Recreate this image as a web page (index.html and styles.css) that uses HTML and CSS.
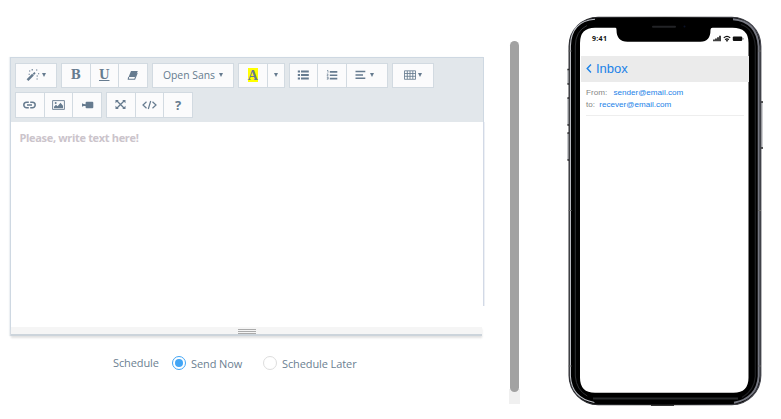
FILE: index.html
```html
<!DOCTYPE html>
<html lang="en">
<head>
<meta charset="utf-8">
<title>Compose email</title>
<link rel="stylesheet" href="styles.css">
</head>
<body>
<main class="page">
  <section class="compose">
    <div class="editor">
      <div class="toolbar">
        <div class="group">
          <button class="btn menu"><svg width="14" height="14" viewBox="0 0 14 14"><path d="M1.5 12.2 7 6.7" stroke="currentColor" stroke-width="2.4"/><path d="M7.4 6.3 9 4.7" stroke="currentColor" stroke-width="1.8"/><path d="M3 3h1.3M6.2 1v1.4M10 2h1.3M2.6 6.2h1.2M12 5.8h1.2M10.6 8h1.3M10.5 11h1.2" stroke="currentColor" stroke-width="1.1"/></svg><i class="caret"></i></button>
        </div>
        <div class="group">
          <button class="btn serif">B</button>
          <button class="btn serif underline">U</button>
          <button class="btn"><svg width="12" height="12" viewBox="0 0 12 12"><path d="M4 2h6.8L8.4 8H1.6z" fill="currentColor"/><path d="M1.6 8.2 1.3 10.2h6.4L10.2 4" fill="none" stroke="currentColor" stroke-width="1.1"/></svg></button>
        </div>
        <div class="group">
          <button class="btn font">Open Sans<i class="caret"></i></button>
        </div>
        <div class="group">
          <button class="btn"><span class="mark">A</span></button>
          <button class="btn narrow"><i class="caret"></i></button>
        </div>
        <div class="group">
          <button class="btn"><svg width="12" height="10" viewBox="0 0 12 10"><path d="M.8 1.5H3M.8 5H3M.8 8.5H3M4 1.5h7.8M4 5h7.8M4 8.5h7.8" stroke="currentColor" stroke-width="1.8"/></svg></button>
          <button class="btn"><svg width="12" height="10" viewBox="0 0 12 10"><path d="M1 .5h1v2.2M.8 4h1.4L1 5.8h1.4M.8 7.2h1.4v2H.8M1.2 8.2h1" fill="none" stroke="currentColor" stroke-width=".7"/><path d="M3.8 1.9h7.5M3.8 5.2h7.5M3.8 8.6h7.5" stroke="currentColor" stroke-width="1.6"/></svg></button>
          <button class="btn menu"><svg class="align" width="11" height="10" viewBox="0 0 11 10"><path d="M.5 1.6h9.8M.5 5h7.5M.5 8.2h9.8" stroke="currentColor" stroke-width="1.5"/></svg><i class="caret wide"></i></button>
        </div>
        <div class="group">
          <button class="btn menu"><svg width="12" height="10" viewBox="0 0 12 10"><path d="M.5.8h11v8.5H.5zM.5 3.5h11M.5 6.3h11M3.3 1v8M6 1v8M8.8 1v8" fill="none" stroke="currentColor" stroke-width=".85"/></svg><i class="caret"></i></button>
        </div>
        <div class="group">
          <button class="btn"><svg width="13" height="8" viewBox="0 0 13 8"><path d="M5.8 1.2H3.6a2.8 2.8 0 0 0 0 5.6h2.2M7.2 1.2h2.2a2.8 2.8 0 0 1 0 5.6H7.2M4 4h5" fill="none" stroke="currentColor" stroke-width="1.5"/></svg></button>
          <button class="btn"><svg width="13" height="10" viewBox="0 0 13 10"><path d="M.6.6h11.8v8.8H.6z" fill="none" stroke="currentColor" stroke-width=".9"/><path d="M2 8.2V6.8l2-2 1.6 1.4 2.9-3.4L11 5.8v2.4z" fill="currentColor"/><circle cx="3.7" cy="3" r="1" fill="currentColor"/></svg></button>
          <button class="btn"><svg width="13" height="8" viewBox="0 0 13 8"><path d="M5.6.8h5.7q1 0 1 1v4.4q0 1-1 1H5.6q-1 0-1-1V1.8q0-1 1-1zM1 2.2l1.6.7 2 .3v1.6l-2 .3L1 5.8z" fill="currentColor"/></svg></button>
        </div>
        <div class="group">
          <button class="btn"><svg width="11" height="11" viewBox="0 0 11 11"><path d="m2 2 7 7m0-7L2 9" stroke="currentColor" stroke-width="1.3"/><path d="M.5 1h3.3L.5 4.3zM10.5 1v3.3L7.2 1zM.5 10V6.7L3.8 10zM10.5 10H7.2l3.3-3.3z" fill="currentColor"/></svg></button>
          <button class="btn"><svg width="15" height="10" viewBox="0 0 15 10"><path d="M4.5 1.8 1 5l3.5 3.2M10.5 1.8 14 5l-3.5 3.2M8.7 1 6.3 9" fill="none" stroke="currentColor" stroke-width="1.2"/></svg></button>
          <button class="btn help">?</button>
        </div>
      </div>
      <div class="text"><p class="placeholder">Please, write text here!</p></div>
      <div class="resize"><div class="grip"></div></div>
    </div>
    <div class="schedule">
      <span class="label">Schedule</span>
      <label class="option now"><span class="radio on"></span>Send Now</label>
      <label class="option"><span class="radio"></span>Schedule Later</label>
    </div>
  </section>
  <div class="scrollbar"><div class="thumb"></div></div>
  <section class="phone">
    <svg class="frame" width="197" height="392" viewBox="0 0 197 392">
      <defs><linearGradient id="rim" x1="0" x2="1"><stop offset="0" stop-color="#303136"/><stop offset=".5" stop-color="#151515"/><stop offset="1" stop-color="#44454d"/></linearGradient></defs>
      <path d="M.9 54.5v14.5M.9 83v27M.9 118v27M195 87v46" stroke="#c3c5c8" stroke-width="1.6"/>
      <path d="M.4 54.5h2M.4 69h2M.4 83h2M.4 110h2M.4 118h2M.4 145h2M194 87h2M194 133h2" stroke="#222" stroke-width="1.3"/>
      <rect x="2.1" y="2.3" width="191.7" height="387.3" rx="29" fill="#000" stroke="url(#rim)" stroke-width="1.2"/>
      <path d="M28 4.2Q4 6 3.4 31v330q1 22 24 26.5" fill="none" stroke="#c0c3c9" stroke-width="1.1"/>
      <path d="M166 4.2q24 2 25.7 27v330q-1.5 22-24.7 26.5" fill="none" stroke="#777983" stroke-width="2"/>
      <path d="M174 9.5q13 4 14.3 22v330q-1 14-13.3 21" fill="none" stroke="#202124" stroke-width="1.2"/>
      <path d="M20 10.5Q8.5 16 8.3 31v330q1 14 12 20" fill="none" stroke="#303235" stroke-width="1"/>
      <path d="M26 383.5h145" stroke="#292b2d" stroke-width="2"/>
      <path d="M1.6 36h3M191 36h3M1.6 195.5h3M191 195.5h3M1.6 351h3M191 351h3" stroke="#666" stroke-width="1.2"/>
      <path d="M28 12.8h20.5q1 0 1 2 0 12 11 12h73q10 0 10-12 0-2 2-2h20q16 0 16 15v335q0 15-15 15H28q-15 0-15-15V28q0-15.2 15-15.2z" fill="#fff"/>
      <rect x="85" y="10.8" width="24" height="2" rx="1" fill="#222326"/>
      <circle cx="117.5" cy="11.5" r="1" fill="#0b1228"/>
      <path d="M84 390.5h23" stroke="#333" stroke-width="1"/>
    </svg>
    <div class="screen">
      <div class="status"><span>9:41</span>
        <svg width="31" height="7" viewBox="0 0 31 7"><path d="M1 6.2V4.5M3 6.2V3.5M5 6.2V2.3M7 6.2V.8" stroke="#111" stroke-width="1.6"/><path d="M10.8 2.9q3.2-3 6.4 0M12.2 4.7q1.8-1.7 3.6 0" fill="none" stroke="#111" stroke-width="1.3"/><circle cx="14" cy="5.7" r=".9" fill="#111"/><rect x="19.8" y="1.5" width="9.4" height="4.5" rx="1" fill="#111"/><path d="M30 3v1.6" stroke="#444" stroke-width=".8"/></svg>
      </div>
      <div class="inbox"><svg width="6" height="9" viewBox="0 0 6 9"><path d="M5 .6 1.2 4.5 5 8.4" fill="none" stroke="#1b82e8" stroke-width="1.4"/></svg>Inbox</div>
      <div class="headers">
        <div class="line from">From: <span>sender@email.com</span></div>
        <div class="line to">to: <span>recever@email.com</span></div>
      </div>
    </div>
  </section>
</main>
</body>
</html>
```

FILE: styles.css
```css
* { box-sizing: border-box; }
body { margin: 0; background: #fff; overflow: hidden; font-family: "Open Sans", sans-serif; color: #6c7f92; }
.page { display: flex; width: 781px; height: 419px; }
.compose { width: 474px; margin: 57px 25px 0 10px; }
.editor { height: 279px; border-left: 1px solid #ced8e2; border-top: 1px solid #ced8e2; box-shadow: -1px 0 1px #eef1f4; }
.toolbar { display: flex; flex-wrap: wrap; gap: 4px; align-content: flex-start; height: 64px; padding: 4.5px 0 0 4px; background: #e2e7eb; border-right: 1px solid #ced8e2; }
.group { display: flex; height: 25.5px; background: #fbfbfc; border: 1px solid #d2dae1; }
.btn { display: flex; align-items: center; justify-content: center; width: 28.5px; padding: 0; border: 0; border-right: 1px solid #d2dae1; background: none; color: #667b8f; font: 11px "Open Sans", sans-serif; }
.btn:last-child { width: 28px; border-right: 0; }
.btn.menu { width: 40px; gap: 2px; }
.btn.narrow { width: 16px; }
.btn.font { width: 80px; gap: 4px; font-size: 10.4px; }
.btn.serif { font: bold 14px "DejaVu Serif", serif; font-size: 12px; }
.btn.underline { text-decoration: underline; }
.btn.help { font-weight: 700; font-size: 13px; }
.caret { border: 2.7px solid transparent; border-top: 4px solid #667b8f; border-bottom: 0; }
.caret.wide { margin-left: 2px; }
.align { margin-left: -5px; }
.mark { width: 10px; height: 14px; background: #ff0; font: bold 14px/15px "Liberation Serif", serif; text-align: center; }
.text { height: 184px; border-right: 1px solid #d2d9e6; box-shadow: 1px 0 0 #edf0f5; }
.placeholder { margin: 0; padding: 7px 8.5px; font-size: 11px; letter-spacing: -.33px; line-height: 17px; font-weight: 700; color: #cbc4cb; }
.resize { width: 471px; height: 9px; margin-top: 21px; padding-top: 2px; background: #f5f5f5; border-bottom: 2px solid #ccd4db; box-shadow: 0 2px 2px #e2e2e2; }
.grip { width: 18px; height: 5px; margin-left: 227px; border-top: 1px solid #aaa; border-bottom: 1px solid #aaa; background: linear-gradient(#f5f5f5 1px, #aaa 1px, #aaa 2px, #f5f5f5 2px); }
.schedule { display: flex; align-items: center; height: 20px; margin: 17px 0 0 103px; font-size: 11px; letter-spacing: -.1px; }
.label { width: 59px; margin-top: -1px; }
.option { display: flex; align-items: center; gap: 5px; }
.option.now { width: 91px; }
.radio { width: 14px; height: 14px; border: 1px solid #ddd; border-radius: 50%; }
.radio.on { border-color: #42a5f5; background: #42a5f5; background-clip: content-box; padding: 2px; }
.scrollbar { width: 11px; height: 363px; margin-top: 41px; padding-left: 1px; background: linear-gradient(#fff 348px, #f0f0f0 348px); }
.thumb { width: 9px; height: 351px; border-radius: 5px; background: #a2a2a2; }
.phone { display: grid; width: 197px; height: 392px; margin: 15px 0 0 47px; }
.frame, .screen { grid-area: 1 / 1; }
.screen { width: 168px; height: 365px; margin: 13px 0 0 14px; font-family: "Liberation Sans", sans-serif; }
.status { display: flex; justify-content: space-between; align-items: center; height: 28px; padding: 5px 5px 12px 11px; font: bold 7px "Open Sans", sans-serif; letter-spacing: .3px; color: #111; }
.inbox { display: flex; align-items: center; gap: 4px; height: 26px; padding: 0 0 2px 5px; background: #ebebeb; color: #1b82e8; font-size: 13px; }
.headers { width: 158px; height: 34px; margin-left: 5px; padding-top: 5px; border-bottom: 1px solid #eee; }
.line { height: 12px; font-size: 8.1px; line-height: 12px; color: #858585; white-space: nowrap; }
.line span { color: #1b82e8; }
.from span { margin-left: 4px; }
.to span { margin-left: 2px; }
```
